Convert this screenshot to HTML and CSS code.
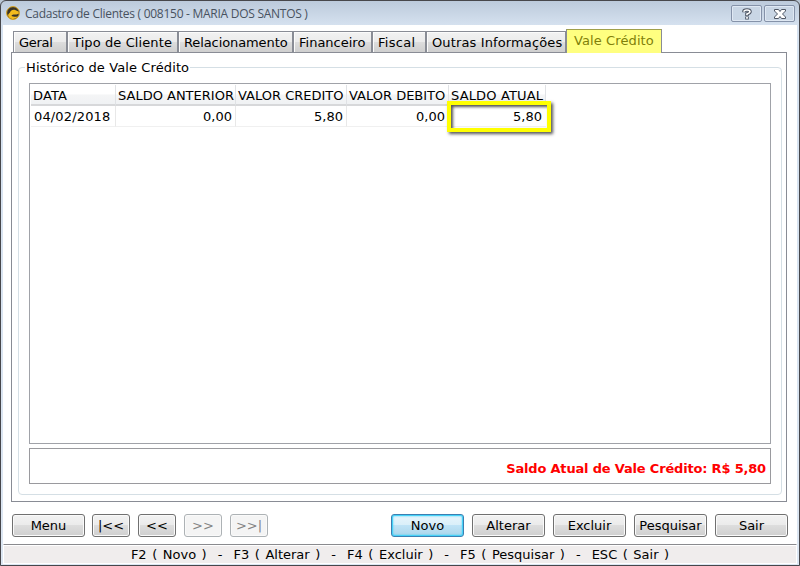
FILE: index.html
```html
<!DOCTYPE html>
<html lang="pt-BR">
<head>
<meta charset="utf-8">
<title>Cadastro de Clientes</title>
<link rel="stylesheet" href="styles.css">
</head>
<body>
<div class="window">
  <header class="titlebar">
    <svg class="logo" width="14" height="14" viewBox="0 0 14 14"><circle cx="7" cy="7" r="6.400" fill="#3a3428" stroke="#e0a81c" stroke-width="1"/><path d="M4 6.500Q5 3.500 8.500 3.800L12.500 5.500L13 7.500L10.500 8.500H7.500Q5.500 8.800 5.500 10Q8 11.500 12 10.200Q10 13.300 6.500 13Q2.500 12.300 2 9Q2.500 7.500 4 6.500Z" fill="#f3bb1c"/></svg>
    <span class="title">Cadastro de Clientes ( 008150 - MARIA DOS SANTOS )</span>
    <div class="caption-btn"><svg width="10" height="12" viewBox="0 0 10 12"><path d="M2 4.200V3.500Q2 2 5 2Q8 2 8 3.700Q8 4.800 5 6V8M5 8.500V11.500" fill="none" stroke="#4e5664" stroke-width="3.600"/><path d="M2 3.800Q2 2 5 2Q8 2 8 3.700Q8 4.800 5 6V7.200M5 9V10.800" fill="none" stroke="#fff" stroke-width="1.700"/></svg></div>
    <div class="caption-btn"><svg width="12" height="10" viewBox="0 0 12 10"><path d="M.5.5H4.500L6 2.500L7.500.5H11.500V2L8.500 5L11.500 8V9.500H7.500L6 7.500L4.500 9.500H.5V8L3.500 5L.5 2Z" fill="#fff" stroke="#4e5664" stroke-width="1"/></svg></div>
  </header>
  <main class="client">
    <nav class="tabs">
      <div class="tab t1"><span>Geral</span></div>
      <div class="tab t2"><span>Tipo de Cliente</span></div>
      <div class="tab t3"><span>Relacionamento</span></div>
      <div class="tab t4"><span>Financeiro</span></div>
      <div class="tab t5"><span>Fiscal</span></div>
      <div class="tab t6"><span>Outras Informações</span></div>
      <div class="tab active"><span>Vale Crédito</span></div>
    </nav>
    <section class="page">
      <div class="group">
        <div class="legend">Histórico de Vale Crédito</div>
        <div class="grid">
          <div class="row head"><div>DATA</div><div>SALDO ANTERIOR</div><div>VALOR CREDITO</div><div>VALOR DEBITO</div><div>SALDO ATUAL</div></div>
          <div class="row data"><div>04/02/2018</div><div>0,00</div><div>5,80</div><div>0,00</div><div class="marked">5,80</div></div>
        </div>
        <div class="total">Saldo Atual de Vale Crédito: R$ 5,80</div>
      </div>
    </section>
    <div class="buttons">
      <button class="wide">Menu</button>
      <button class="first">|&lt;&lt;</button>
      <button>&lt;&lt;</button>
      <button disabled>&gt;&gt;</button>
      <button disabled>&gt;&gt;|</button>
      <span class="spacer"></span>
      <button class="wide default">Novo</button>
      <button class="wide">Alterar</button>
      <button class="wide">Excluir</button>
      <button class="wide">Pesquisar</button>
      <button class="wide">Sair</button>
    </div>
    <footer class="status">F2 ( Novo )  -  F3 ( Alterar )  -  F4 ( Excluir )  -  F5 ( Pesquisar )  -  ESC ( Sair )</footer>
  </main>
</div>
</body>
</html>
```
FILE: styles.css
```css
*, *::after { box-sizing: border-box; }
html { background: #b9c6d4; }
body {
  margin: 0;
  width: 800px;
  height: 566px;
  overflow: hidden;
  font: 13px/16px "DejaVu Sans", Verdana, sans-serif;
  color: #000;
}
.window {
  height: 566px;
  padding: 0 2px 2px;
  border: 1px solid #47474b;
  border-radius: 6px 6px 0 0;
  background: linear-gradient(#bccadb, #d6e2f0 25px, #dce6f2);
}
.titlebar {
  height: 24px;
  display: flex;
  align-items: flex-start;
  padding: 0 2px 0 3px;
}
.logo { margin: 5px 5px 0 0; }
.title {
  flex: 1;
  padding-top: 4px;
  font: 12px/17px "Open Sans", "Noto Sans", sans-serif;
  letter-spacing: -0.27px;
  white-space: pre;
  color: #48525f;
}
.caption-btn {
  width: 31px;
  height: 17px;
  margin: 4px 0 0 2px;
  display: flex;
  align-items: center;
  justify-content: center;
  border: 1px solid #8592a9;
  border-radius: 2px;
  box-shadow: inset 0 0 0 1px #dfe8f3;
  background: #c9d6e5;
}
.client {
  height: 539px;
  display: flex;
  flex-direction: column;
  background: #fff;
}
.tabs {
  height: 27px;
  flex: none;
  display: flex;
  align-items: flex-end;
  padding-left: 10px;
}
.tab {
  height: 21px;
  padding: 3px 0 0 5px;
  border: solid #898c95;
  border-width: 1px 1px 0;
  box-shadow: inset 1px 1px #fbfbfb;
  background: linear-gradient(#f2f2f2, #ebebeb 50%, #dddddd 50%, #cfcfcf);
  white-space: nowrap;
}
.t1 { width: 54px; letter-spacing: -0.3px; }
.t2 { width: 111px; letter-spacing: 0.1px; }
.t3 { width: 115px; letter-spacing: -0.1px; }
.t4 { width: 79px; }
.t5 { width: 54px; letter-spacing: 0.3px; }
.t6 { width: 140px; letter-spacing: 0.13px; }
.active {
  position: relative;
  width: 96px;
  height: 24px;
  margin-bottom: -1px;
  padding: 3px 0 0 7px;
  border-color: #a0a04a #898c95 #898c95;
  box-shadow: none;
  background: #ffff80;
  letter-spacing: 0.1px;
  color: #80800a;
}
.page {
  width: 776px;
  height: 450px;
  flex: none;
  margin-left: 8px;
  padding: 14px 4px 6px 6px;
  border: 1px solid #898c95;
}
.group {
  height: 428px;
  padding: 0 10px;
  border: 1px solid #d5dfe5;
  border-radius: 4px;
}
.legend {
  width: max-content;
  height: 16px;
  margin: -8px 0 7px -4px;
  padding: 0 1px;
  background: #fff;
  letter-spacing: 0.11px;
}
.grid {
  height: 361px;
  padding-left: 1px;
  border: 1px solid #a0a2a8;
}
.row {
  display: grid;
  grid-template-columns: 85px 120px 111px 102px 97px;
  width: 515px;
  height: 21px;
  line-height: 22px;
  white-space: nowrap;
}
.row > div {
  height: 21px;
  border-right: 1px solid #e8e8e8;
  border-bottom: 1px solid #f0f0f0;
  padding: 0 2px;
  text-align: right;
}
.row > div:first-child { text-align: left; letter-spacing: 0.15px; }
.head {
  height: 22px;
  padding-top: 1px;
  background: linear-gradient(#fff 45%, #f4f5f6 50%, #eff1f3);
}
.head > div { border-bottom: 2px solid #d7d8da; border-right-color: #e0e2e5; }
.head > div:not(:first-child) { text-align: left; }
.head > div:last-child { letter-spacing: 0.15px; }
.data > div { padding-right: 3px; padding-left: 3px; }
.row > .marked { position: relative; border-right: 0; padding-right: 4px; }
.marked::after {
  content: "";
  position: absolute;
  left: -2px;
  top: -5px;
  width: 104px;
  height: 31px;
  border: 4px solid #ffff00;
  box-shadow: 2px 2px 3px #555, inset 2px 2px 3px #555;
}
.total {
  height: 36px;
  margin-top: 4px;
  padding: 12px 4px 0 0;
  border: 1px solid #9a9a9e;
  text-align: right;
  font-weight: bold;
  letter-spacing: -0.18px;
  color: #f00;
}
.buttons {
  display: flex;
  gap: 8px;
  height: 42px;
  flex: none;
  padding: 12px 9px 0;
}
.spacer { flex: 1; }
button {
  width: 38px;
  height: 23px;
  padding: 0;
  border: 1px solid #707070;
  border-radius: 3px;
  box-shadow: inset 0 0 0 1px #fafafa;
  background: linear-gradient(#f2f2f2, #ebebeb 50%, #dddddd 50%, #cfcfcf);
  font: inherit;
  color: #000;
  white-space: nowrap;
}
button.wide { width: 73px; }
button.first { margin-left: -1px; }
button:disabled { border-color: #adb2b5; background: #f4f4f4; color: #838383; }
button.default {
  border-color: #3c7fb1;
  box-shadow: inset 0 0 0 1px #46d2f8, inset 0 0 2px 1px #46d2f8;
  background: linear-gradient(#e8f5fc, #d9eff9 50%, #bfe3f6 50%, #abd5ea);
}
.status {
  flex: 1;
  padding-top: 2px;
  border: 1px solid #fff;
  border-top-color: #8a8a8e;
  box-shadow: inset 0 1px #fff;
  background: #f0eded;
  text-align: center;
  white-space: pre;
  word-spacing: 1.4px;
}
```
